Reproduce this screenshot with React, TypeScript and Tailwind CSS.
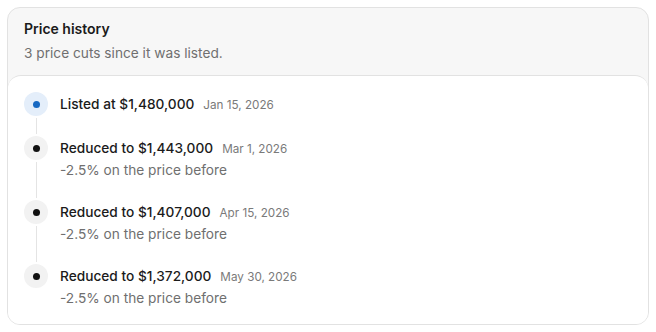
import React from "react";

const items = [
  { title: "Listed at $1,480,000", date: "Jan 15, 2026", sub: null, first: true },
  { title: "Reduced to $1,443,000", date: "Mar 1, 2026", sub: "-2.5% on the price before" },
  { title: "Reduced to $1,407,000", date: "Apr 15, 2026", sub: "-2.5% on the price before" },
  { title: "Reduced to $1,372,000", date: "May 30, 2026", sub: "-2.5% on the price before" },
];

export default function App() {
  return (
    <div className="w-[656px] h-[332px] bg-white p-[7px] pb-[7px]" style={{ fontFamily: "Inter, 'Noto Sans', sans-serif" }}>
      <div className="h-full flex flex-col rounded-[13px] border border-[#e2e2e2] bg-[#f7f7f7] overflow-hidden">
        <div className="px-4 pt-[11px] pb-[12px]">
          <div className="text-[14px] leading-5 font-semibold text-[#1b1b1b]">Price history</div>
          <div className="mt-1 text-[13.7px] leading-5 text-[#6f6f6f]">3 price cuts since it was listed.</div>
        </div>
        <div className="flex-1 bg-white rounded-t-[13px] border-t border-[#e2e2e2] px-4 pt-4 pb-4">
          <div className="flex flex-col">
            {items.map((it, i) => (
              <div key={i} className="flex gap-3">
                <div className="flex flex-col items-center w-6">
                  <div
                    className={
                      "w-6 h-6 rounded-full flex items-center justify-center shrink-0 " +
                      (it.first ? "bg-[#e4eefa]" : "bg-[#f2f2f2]")
                    }
                  >
                    <div className={"w-[7px] h-[7px] rounded-full " + (it.first ? "bg-[#1769c2]" : "bg-[#111111]")} />
                  </div>
                  {i < items.length - 1 && <div className="w-px flex-1 bg-[#e4e4e4] my-[2px]" />}
                </div>
                <div className={i < items.length - 1 ? "pb-5" : ""}>
                  <div className="flex items-baseline gap-[9px] h-6 leading-6">
                    <span className="text-[13.7px] font-medium text-[#1b1b1b]">{it.title}</span>
                    <span className="text-[11.7px] text-[#7a7a7a]">{it.date}</span>
                  </div>
                  {it.sub && <div className="text-[13.7px] leading-5 text-[#6f6f6f]">{it.sub}</div>}
                </div>
              </div>
            ))}
          </div>
        </div>
      </div>
    </div>
  );
}
